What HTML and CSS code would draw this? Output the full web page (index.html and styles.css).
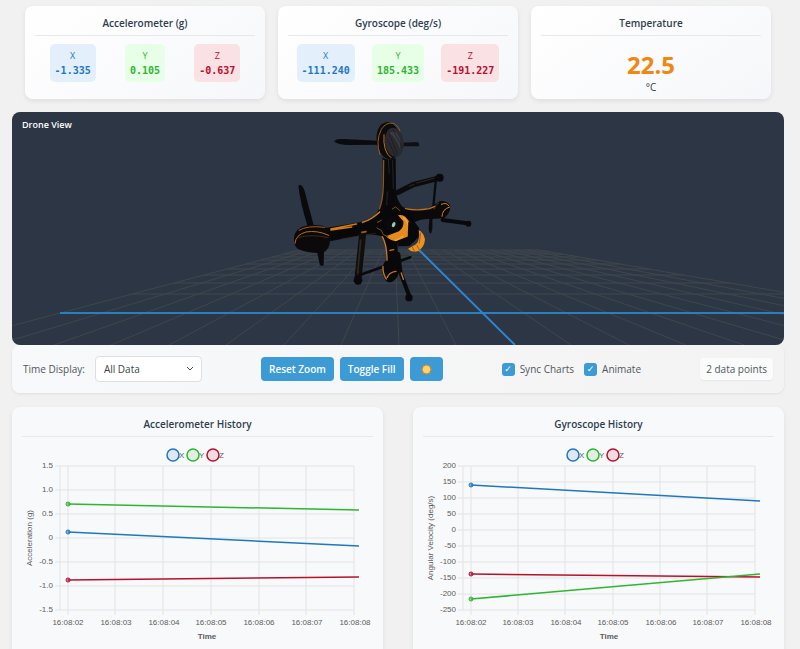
FILE: index.html
```html
<!DOCTYPE html>
<html lang="en">
<head>
<meta charset="utf-8">
<meta name="viewport" content="width=device-width, initial-scale=1">
<title>Drone Telemetry</title>
<link rel="stylesheet" href="styles.css">
</head>
<body>
<main class="page">
  <section class="readings">
    <article class="card">
      <h2 class="title">Accelerometer (g)</h2>
      <div class="axes">
        <div class="axis axis-x"><span>X</span><b>-1.335</b></div>
        <div class="axis axis-y"><span>Y</span><b>0.105</b></div>
        <div class="axis axis-z"><span>Z</span><b>-0.637</b></div>
      </div>
    </article>
    <article class="card">
      <h2 class="title">Gyroscope (deg/s)</h2>
      <div class="axes">
        <div class="axis axis-x"><span>X</span><b>-111.240</b></div>
        <div class="axis axis-y"><span>Y</span><b>185.433</b></div>
        <div class="axis axis-z"><span>Z</span><b>-191.227</b></div>
      </div>
    </article>
    <article class="card">
      <h2 class="title">Temperature</h2>
      <div class="temperature"><strong>22.5</strong><span>°C</span></div>
    </article>
  </section>

  <section class="scene">
    <svg viewBox="0 0 772 233" preserveAspectRatio="xMidYMid slice" role="img" aria-label="Drone model">
      <g fill="none" stroke="#41464b">
        <path d="M120 182H782M162 171H718M192 163H672M215 157H637M234 152H608M249 148H585M260 145H567M272 142H550M279 140H538M287 138H527"/>
        <path d="M287 138L-73 233M299 138L-16 233M311 138L42 233M323 138L99 233M335 138L157 233M347 138L214 233M359 138L272 233M371 138L329 233M383 138L387 233M395 138L444 233M419 138L559 233M431 138L617 233M443 138L674 233M455 138L732 233M467 138L789 233M479 138L847 233M491 138L904 233M503 138L962 233M515 138L1019 233M527 138L1077 233"/>
      </g>
      <path d="M48 201H772" stroke="#2a7fbe" stroke-width="2"/>
      <path d="M407 138L503 233" stroke="#2f86cc" stroke-width="2"/>
      <g transform="translate(268 -2) scale(.3333)" stroke-linecap="round" stroke-linejoin="round">
        <!-- far arm and landing legs -->
        <path d="M468 206L460 290" stroke="#0b0b0d" stroke-width="7" fill="none"/>
        <path d="M352 248L400 224L478 204" stroke="#0c0b0b" stroke-width="16" fill="none"/>
        <path d="M388 229L402 223M410 219L462 205" stroke="#33261c" stroke-width="3"/>
        <circle cx="479" cy="203" r="12" fill="#09090b"/>
        <path d="M449 320L446 350Q446 368 452 371Q459 362 457 335L458 316Z" fill="#0b0b0d"/>
        <path d="M488 330L562 340" stroke="#09090b" stroke-width="12"/>
        <circle cx="565" cy="341" r="9" fill="#09090b"/>
        <path d="M360 290Q405 302 444 296L480 273Q505 272 511 289Q511 310 492 325L452 327Q425 325 402 337L360 320Z" fill="#0b090a"/>
        <path d="M376 296Q410 303 448 296L465 289" stroke="#bd711c" stroke-width="4" fill="none"/>
        <path d="M484 283Q500 276 506 287M486 319Q486 298 509 291" stroke="#d88421" stroke-width="3" fill="none"/>
        <path d="M475 279Q466 286 462 297" stroke="#5e3b1b" stroke-width="3" fill="none"/>

        <!-- upper rotor and arm -->
        <path d="M162 94Q169 85 190 87L292 92L294 104L210 105Q171 105 162 94Z" fill="#0b0a0c"/>
        <path d="M365 98L412 96Q421 102 416 109L365 109Z" fill="#101013"/>
        <path d="M308 142Q320 154 347 144L348 245Q350 272 370 293L396 310L400 350L303 350L280 326Q307 290 308 250Z" fill="#09080a"/>
        <path d="M311 151L310 225Q309 272 298 297" stroke="#8d5418" stroke-width="4" fill="none"/>
        <path d="M325 145L328 190M338 151L340 235M322 245L320 284" stroke="#252329" stroke-width="3"/>
        <ellipse cx="326" cy="92" rx="36" ry="56" fill="#0d0b0b" transform="rotate(-8 326 92)"/>
        <path d="M300 134Q286 94 304 58Q318 36 339 40Q353 45 360 62" stroke="#9a5b18" stroke-width="3" fill="none"/>
        <path d="M312 74Q308 125 333 143" stroke="#c2741e" stroke-width="3" fill="none"/>
        <ellipse cx="343" cy="97" rx="28" ry="44" fill="#292a30" transform="rotate(-8 343 97)"/>
        <path d="M327 69Q352 53 361 92L360 117Q347 82 327 69Z" fill="#3a3b41"/>
        <path d="M327 70L352 131M340 61L367 112M322 88L347 138" stroke="#18191d" stroke-width="2"/>

        <!-- left rotor and arm -->
        <path d="M55 227Q64 219 73 240L101 346L83 349Q61 280 55 227Z" fill="#0a0a0c"/>
        <path d="M111 424L132 424L131 464Q125 473 119 463Z" fill="#0a0a0c"/>
        <path d="M137 354L227 339Q267 333 300 302L337 316L345 382Q321 390 300 377Q275 372 250 374L150 394Z" fill="#090809"/>
        <path d="M153 357L229 342M248 337Q273 330 299 306M153 360L215 351" stroke="#d37b1c" stroke-width="5" fill="none"/>
        <path d="M184 387L286 370" stroke="#3c2919" stroke-width="2"/>
        <path d="M42 390Q40 365 65 351Q92 342 130 347Q151 356 150 388Q151 420 126 429Q82 430 54 417Q42 408 42 390Z" fill="#0b090a"/>
        <path d="M45 400Q47 374 78 366Q111 360 146 376" stroke="#b96b1b" stroke-width="3" fill="none"/>
        <path d="M57 361Q83 345 134 352" stroke="#a65f1a" stroke-width="3" fill="none"/>
        <path d="M54 383Q94 371 144 383" stroke="#3d2716" stroke-width="3" fill="none"/>

        <!-- lower arm and legs -->
        <path d="M248 371L234 506" stroke="#100e0d" stroke-width="21"/>
        <path d="M242 390L233 490" stroke="#302720" stroke-width="5"/>
        <path d="M246 367L258 365" stroke="#9c5d1e" stroke-width="5"/>
        <circle cx="234" cy="511" r="13" fill="#09090b"/>
        <path d="M242 494L309 470M352 456L391 442" stroke="#0a0a0c" stroke-width="8"/>
        <path d="M355 432L362 490L387 556" stroke="#0a090a" stroke-width="12" fill="none"/>
        <circle cx="387" cy="563" r="11" fill="#09090b"/>
        <path d="M305 373Q322 400 318 451Q301 472 310 497Q319 522 335 516Q358 504 358 474L352 404L389 350Z" fill="#090809"/>
        <path d="M307 380Q321 405 321 451M309 469Q308 492 319 507M322 502Q328 486 348 484M330 421L341 419M364 489L370 508" stroke="#cb7820" stroke-width="4" fill="none"/>

        <!-- body and camera -->
        <path d="M303 302L335 286L382 305L417 354L402 397L348 396L288 359Z" fill="#08080a"/>
        <path d="M354 316Q375 309 390 340Q396 363 382 380L347 394Q329 391 318 379L357 364Q373 351 370 334Z" fill="#e78b1c"/>
        <path d="M370 323Q397 346 383 378M347 391L369 379" stroke="#f5a33c" stroke-width="4" fill="none"/>
        <path d="M385 335L410 346Q425 360 415 382L388 408L353 409L357 394L383 382Z" fill="#09090a"/>
        <path d="M416 360Q431 368 435 388Q434 409 417 422Q397 431 384 416L408 403Q422 389 416 360Z" fill="#ed921e"/>
        <path d="M422 369L418 399M411 407L419 420M397 411L404 425" stroke="#a85c11" stroke-width="3"/>
        <circle cx="337" cy="343" r="22" fill="#0a0a0c"/>
        <ellipse cx="341" cy="344" rx="5" ry="8" fill="#9bc5b4" transform="rotate(25 341 344)"/>
        <path d="M291 354L304 361L310 374L324 380M337 297L347 291L360 302M292 337L304 331" stroke="#7d4d19" stroke-width="3" fill="none"/>
      </g>
    </svg>
    <h2 class="scene-title">Drone View</h2>
  </section>

  <section class="controls">
    <div class="group range">
      <label for="range">Time Display:</label>
      <div class="select-wrap">
        <select id="range"><option>All Data</option></select>
        <svg viewBox="0 0 8 6" aria-hidden="true"><path d="M1 1l3 3 3-3"/></svg>
      </div>
    </div>
    <div class="group buttons">
      <button type="button">Reset Zoom</button>
      <button type="button">Toggle Fill</button>
      <button type="button" class="sun" aria-label="Toggle theme">
        <svg viewBox="0 0 12 12" aria-hidden="true"><path fill="#e78820" d="M6 0l1.6 1.5 2.6-.1-.1 2.5L12 6l-1.8 1.9v2.5l-2.5-.1L6 12l-1.8-1.7-2.5.1.1-2.5L0 6l1.8-2.1-.1-2.5 2.6.1z"/><circle cx="6" cy="6" r="4" fill="#fbd56b"/></svg>
      </button>
    </div>
    <div class="group checks">
      <label><input type="checkbox" checked>Sync Charts</label>
      <label><input type="checkbox" checked>Animate</label>
    </div>
    <output class="count">2 data points</output>
  </section>

  <section class="charts">
    <article class="card chart">
      <h2 class="title">Accelerometer History</h2>
      <svg viewBox="0 0 351 212" role="img" aria-label="Accelerometer history chart">
        <path class="grid" d="M33 29H332M33 53H332M33 77H332M33 101H332M33 125H332M33 149H332M33 173H332M38 29V173M46 29V178M93 29V178M141 29V178M189 29V178M237 29V178M284 29V178M332 29V178"/>
        <g class="ticks-y"><text x="31" y="31">1.5</text><text x="31" y="55">1.0</text><text x="31" y="79">0.5</text><text x="31" y="103">0</text><text x="31" y="127">-0.5</text><text x="31" y="151">-1.0</text><text x="31" y="175">-1.5</text></g>
        <g class="ticks-x"><text x="46" y="188">16:08:02</text><text x="94" y="188">16:08:03</text><text x="142" y="188">16:08:04</text><text x="189" y="188">16:08:05</text><text x="237" y="188">16:08:06</text><text x="285" y="188">16:08:07</text><text x="333" y="188">16:08:08</text></g>
        <text class="name-x" x="185" y="202">Time</text>
        <text class="name-y" transform="translate(10 101) rotate(-90)">Acceleration (g)</text>
        <g class="line line-z"><path d="M46 143L337 140"/><circle class="dot" cx="46" cy="143" r="2"/><circle class="key" cx="191" cy="18" r="6"/></g>
        <g class="line line-y"><path d="M46 67L337 73"/><circle class="dot" cx="46" cy="67" r="2"/><circle class="key" cx="171" cy="18" r="6"/></g>
        <g class="line line-x"><path d="M46 95L337 109"/><circle class="dot" cx="46" cy="95" r="2"/><circle class="key" cx="151" cy="18" r="6"/></g>
        <g class="legend"><text x="157" y="21">X</text><text x="177" y="21">Y</text><text x="197" y="21">Z</text></g>
      </svg>
    </article>
    <article class="card chart">
      <h2 class="title">Gyroscope History</h2>
      <svg viewBox="0 0 351 212" role="img" aria-label="Gyroscope history chart">
        <path class="grid" d="M35 29H332M35 45H332M35 61H332M35 77H332M35 93H332M35 109H332M35 125H332M35 141H332M35 157H332M35 173H332M40 29V173M48 29V178M95 29V178M142 29V178M190 29V178M237 29V178M284 29V178M332 29V178"/>
        <g class="ticks-y"><text x="33" y="31">200</text><text x="33" y="47">150</text><text x="33" y="63">100</text><text x="33" y="79">50</text><text x="33" y="95">0</text><text x="33" y="111">-50</text><text x="33" y="127">-100</text><text x="33" y="143">-150</text><text x="33" y="159">-200</text><text x="33" y="175">-250</text></g>
        <g class="ticks-x"><text x="48" y="188">16:08:02</text><text x="95" y="188">16:08:03</text><text x="143" y="188">16:08:04</text><text x="190" y="188">16:08:05</text><text x="238" y="188">16:08:06</text><text x="285" y="188">16:08:07</text><text x="333" y="188">16:08:08</text></g>
        <text class="name-x" x="186" y="202">Time</text>
        <text class="name-y" transform="translate(10 101) rotate(-90)">Angular Velocity (deg/s)</text>
        <g class="line line-z"><path d="M48 137L337 140"/><circle class="dot" cx="48" cy="137" r="2"/><circle class="key" cx="190" cy="18" r="6"/></g>
        <g class="line line-y"><path d="M48 162L337 137"/><circle class="dot" cx="48" cy="162" r="2"/><circle class="key" cx="170" cy="18" r="6"/></g>
        <g class="line line-x"><path d="M48 48L337 64"/><circle class="dot" cx="48" cy="48" r="2"/><circle class="key" cx="150" cy="18" r="6"/></g>
        <g class="legend"><text x="156" y="21">X</text><text x="176" y="21">Y</text><text x="196" y="21">Z</text></g>
      </svg>
    </article>
  </section>
</main>
</body>
</html>
```
FILE: styles.css
```css
* { box-sizing: border-box; }

body {
  margin: 0;
  background: #f1f1f1;
  color: #2c3e50;
  font: 10px/14px "Open Sans", "Noto Sans", sans-serif;
}

.page {
  min-height: 100vh;
  padding: 6px 16px 0 12px;
  display: flex;
  flex-direction: column;
}

.card {
  padding: 10px;
  border-radius: 8px;
  background: linear-gradient(145deg, #ffffff, #f6f7fa);
  box-shadow: 0 2px 5px rgba(0, 0, 0, 0.08);
}

.title {
  margin: 0;
  padding-bottom: 4px;
  border-bottom: 1px solid #e6e8ea;
  font-size: 10px;
  line-height: 15px;
  font-weight: 600;
  text-align: center;
}

.readings {
  display: grid;
  grid-template-columns: repeat(3, 1fr);
  gap: 13px;
  padding: 0 13px;
  margin-bottom: 13px;
}

.readings .card {
  min-height: 93px;
  padding-bottom: 4px;
}

.axes {
  display: flex;
  justify-content: space-around;
  padding-top: 8px;
}

.axis {
  display: flex;
  flex-direction: column;
  align-items: center;
  padding: 4px 5px;
  border-radius: 5px;
  font-size: 9px;
  line-height: 15px;
}

.axis b { font: bold 10px/15px "DejaVu Sans Mono", monospace; }
.axis-x { background: #e3effb; color: #1f77be; }
.axis-y { background: #e6ffe6; color: #32b332; }
.axis-z { background: #fae1e3; color: #b80f2e; }

.temperature {
  display: flex;
  flex-direction: column;
  align-items: center;
  padding-top: 14px;
}

.temperature strong {
  color: #f0870e;
  font-size: 24px;
  line-height: 30px;
}

.scene {
  position: relative;
  overflow: hidden;
  border-radius: 8px;
  background: #2c3645;
}

.scene svg { display: block; width: 100%; }

.scene-title {
  position: absolute;
  top: 6px;
  left: 10px;
  margin: 0;
  color: #ffffff;
  font-size: 9px;
  font-weight: 600;
  line-height: 14px;
}

.controls {
  display: flex;
  justify-content: space-between;
  align-items: center;
  min-height: 48px;
  padding: 0 11px;
  margin-bottom: 14px;
  border-radius: 8px;
  background: linear-gradient(90deg, #f8f9fb, #f3f3f3);
  box-shadow: 0 1px 3px rgba(0, 0, 0, 0.08);
  color: #50575b;
  font-weight: 500;
}

.group { display: flex; align-items: center; }
.range { gap: 10px; }
.select-wrap { position: relative; }

.select-wrap select {
  appearance: none;
  width: 107px;
  height: 26px;
  padding: 0 8px;
  border: 1px solid #dddfe1;
  border-radius: 4px;
  background: #ffffff;
  color: #3c4348;
  font: 10px "Open Sans", sans-serif;
}

.select-wrap svg {
  position: absolute;
  top: 10px;
  right: 8px;
  width: 8px;
  height: 6px;
  fill: none;
  stroke: #44494d;
}

.buttons { gap: 6px; }

.buttons button {
  height: 24px;
  padding: 0 8px;
  border: 0;
  border-radius: 4px;
  background: #3c9ad5;
  color: #ffffff;
  font: 600 10px "Open Sans", sans-serif;
}

.buttons .sun { padding: 0 11px; }
.sun svg { display: block; width: 11px; height: 11px; }
.checks { gap: 10px; }

.checks label { display: flex; align-items: center; gap: 5px; }

.checks input {
  appearance: none;
  display: grid;
  place-items: center;
  width: 13px;
  height: 13px;
  margin: 0;
  border-radius: 3px;
  background: #3c9ad5;
}

.checks input:checked::after {
  content: "✓";
  color: #ffffff;
  font: bold 9px/13px "DejaVu Sans", sans-serif;
}

.count {
  padding: 4px 6px;
  border-radius: 4px;
  background: #fafbfb;
  box-shadow: 0 1px 2px rgba(0, 0, 0, 0.05);
}

.charts {
  flex: 1;
  display: grid;
  grid-template-columns: repeat(2, 1fr);
  gap: 30px;
}

.chart {
  padding-bottom: 0;
  border-radius: 8px 8px 0 0;
  background: #f8f9fa;
}

.chart svg { display: block; width: 100%; }

.chart text {
  font: 8px "Liberation Sans", sans-serif;
  fill: #5c5c5c;
}

.chart .name-x { font-weight: bold; text-anchor: middle; }
.name-y, .ticks-x { text-anchor: middle; }
.ticks-y { text-anchor: end; }
.grid { fill: none; stroke: #e3e4e5; }
.line path { fill: none; stroke-width: 1.5; }
.dot { fill-opacity: 0.5; stroke-width: 1; }
.key { fill-opacity: 0.12; stroke-width: 1.5; }
.line-x { stroke: #1f77be; fill: #1f77be; }
.line-y { stroke: #2fb52f; fill: #2fb52f; }
.line-z { stroke: #b80f2e; fill: #b80f2e; }
```
